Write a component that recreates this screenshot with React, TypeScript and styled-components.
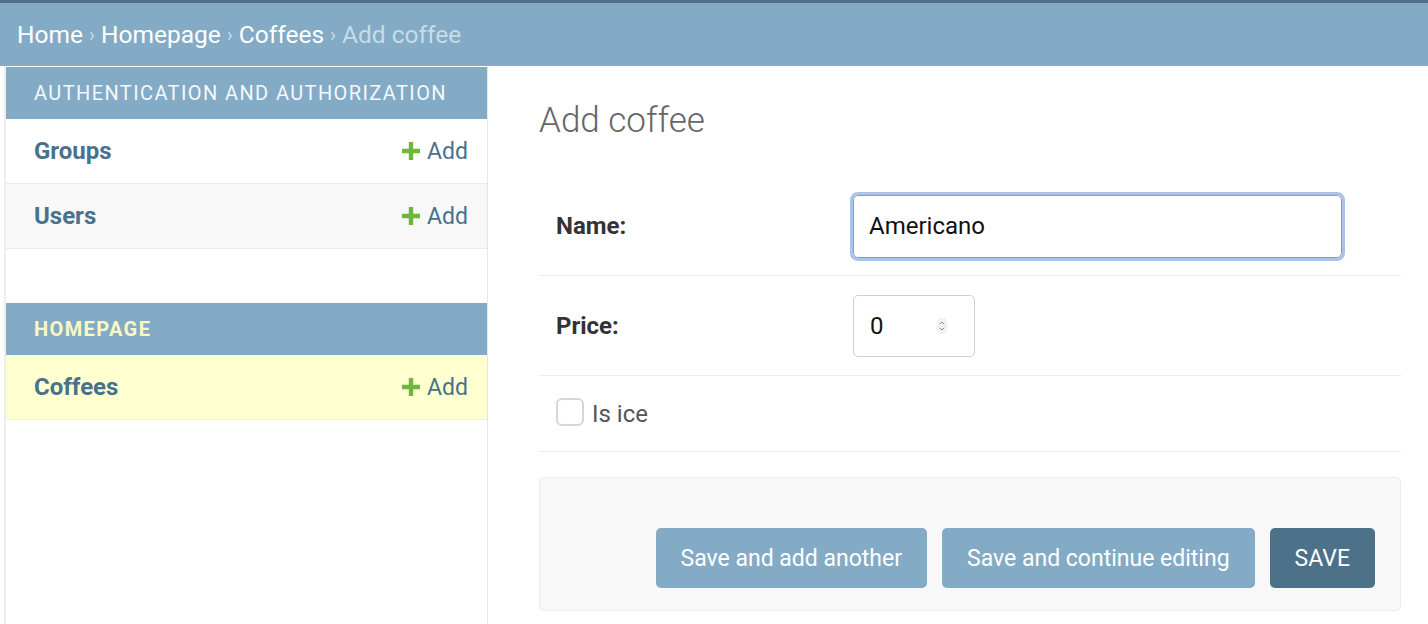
import React from "react";
import styled, { createGlobalStyle } from "styled-components";

const Global = createGlobalStyle`
  html, body { margin: 0; padding: 0; background: #fff; }
  body { font-family: Roboto, "Liberation Sans", Arial, sans-serif; color: #333; }
  * { box-sizing: border-box; }
`;

const Page = styled.div`
  width: 1428px;
  height: 624px;
  overflow: hidden;
  display: flex;
  flex-direction: column;
`;

const Breadcrumbs = styled.nav`
  height: 66px;
  background: #83abc5;
  border-top: 3px solid #4d6f88;
  padding: 0 0 0 17px;
  display: flex;
  align-items: center;
  font-size: 24.5px;
  color: #eaf2f7;
  white-space: nowrap;
`;

const Crumb = styled.span<{ $current?: boolean }>`
  color: ${(p) => (p.$current ? "#c7dce9" : "#ffffff")};
`;

const Sep = styled.span`
  color: #c7dce9;
  margin: 0 6px;
  font-size: 20px;
`;

const Body = styled.div`
  flex: 1;
  display: flex;
  min-height: 0;
`;

const Sidebar = styled.aside`
  width: 484px;
  margin-left: 4px;
  border-left: 2px solid #eeeeee;
  border-right: 1px solid #e6e6e6;
  padding-top: 1px;
`;

const Module = styled.div`
  margin-bottom: 54px;
`;

const Caption = styled.div<{ $current?: boolean }>`
  height: 52px;
  background: #83abc5;
  display: flex;
  align-items: center;
  padding-left: 28px;
  font-size: 20px;
  letter-spacing: 1.4px;
  font-weight: ${(p) => (p.$current ? 700 : 400)};
  color: ${(p) => (p.$current ? "#fbf8c4" : "#f4f8fb")};
  text-transform: uppercase;
`;

const ModelRow = styled.div<{ $alt?: boolean; $current?: boolean }>`
  height: 65px;
  display: flex;
  align-items: center;
  justify-content: space-between;
  padding: 0 19px 0 28px;
  border-bottom: 1px solid #ececec;
  background: ${(p) => (p.$current ? "#ffffcf" : p.$alt ? "#f8f8f8" : "#ffffff")};
`;

const ModelLink = styled.span`
  font-size: 24px;
  font-weight: 700;
  color: #48718d;
`;

const AddLink = styled.span`
  display: flex;
  align-items: center;
  gap: 7px;
  font-size: 23px;
  color: #48718d;
`;

const Main = styled.main`
  flex: 1;
  padding: 34px 27px 0 51px;
`;

const Title = styled.h1`
  margin: 0 0 35px 0;
  font-size: 35px;
  font-weight: 300;
  color: #666;
  line-height: 42px;
`;

const FormRow = styled.div<{ $h: number }>`
  height: ${(p) => p.$h}px;
  display: flex;
  align-items: center;
  border-bottom: 1px solid #eeeeee;
  padding-left: 17px;
`;

const Label = styled.label`
  width: 297px;
  font-size: 24px;
  font-weight: 700;
  color: #333;
`;

const TextInput = styled.div`
  width: 489px;
  height: 63px;
  border: 1px solid #9a9a9a;
  border-radius: 5px;
  outline: 3px solid #a9c4ea;
  outline-offset: 0px;
  display: flex;
  align-items: center;
  padding-left: 15px;
  font-size: 24px;
  color: #111;
`;

const NumberInput = styled.div`
  width: 122px;
  height: 62px;
  border: 1px solid #d0d0d0;
  border-radius: 5px;
  display: flex;
  align-items: center;
  justify-content: space-between;
  padding: 0 26px 0 16px;
  font-size: 24px;
  color: #111;
`;

const CheckBox = styled.span`
  width: 28px;
  height: 28px;
  border: 2px solid #d6d6d6;
  border-radius: 6px;
  margin: 0 8px 4px 0;
  background: #fff;
`;

const CheckLabel = styled.span`
  font-size: 24px;
  color: #555;
`;

const SubmitRow = styled.div`
  margin-top: 25px;
  height: 134px;
  background: #f8f8f8;
  border: 1px solid #ededed;
  border-radius: 5px;
  display: flex;
  justify-content: flex-end;
  align-items: flex-start;
  gap: 15px;
  padding: 50px 25px 0 0;
`;

const Button = styled.button<{ $primary?: boolean }>`
  height: 60px;
  border: none;
  border-radius: 5px;
  padding: 0 25px;
  font-family: Roboto, "Liberation Sans", Arial, sans-serif;
  font-size: 23px;
  color: #fff;
  background: ${(p) => (p.$primary ? "#4d7189" : "#84abc5")};
  cursor: pointer;
`;

const Plus = () => (
  <svg width="18" height="18" viewBox="0 0 18 18">
    <path d="M6.8 0h4.4v6.8H18v4.4h-6.8V18H6.8v-6.8H0V6.8h6.8z" fill="#6cb83d" />
  </svg>
);

const Spinner = () => (
  <svg width="12" height="18" viewBox="0 0 12 18">
    <rect x="0.5" y="0.5" width="11" height="17" rx="5.5" fill="#f2f2f2" />
    <path d="M3.8 7.2L6 5l2.2 2.2M3.8 10.8L6 13l2.2-2.2" fill="none" stroke="#888" strokeWidth="1" />
  </svg>
);

const models = [
  { name: "Groups", alt: false },
  { name: "Users", alt: true },
];

export default function App() {
  return (
    <Page>
      <Global />
      <Breadcrumbs>
        <Crumb>Home</Crumb>
        <Sep>›</Sep>
        <Crumb>Homepage</Crumb>
        <Sep>›</Sep>
        <Crumb>Coffees</Crumb>
        <Sep>›</Sep>
        <Crumb $current>Add coffee</Crumb>
      </Breadcrumbs>
      <Body>
        <Sidebar>
          <Module>
            <Caption>Authentication and Authorization</Caption>
            {models.map((m) => (
              <ModelRow key={m.name} $alt={m.alt}>
                <ModelLink>{m.name}</ModelLink>
                <AddLink>
                  <Plus />
                  Add
                </AddLink>
              </ModelRow>
            ))}
          </Module>
          <Module>
            <Caption $current>Homepage</Caption>
            <ModelRow $current>
              <ModelLink>Coffees</ModelLink>
              <AddLink>
                <Plus />
                Add
              </AddLink>
            </ModelRow>
          </Module>
        </Sidebar>
        <Main>
          <Title>Add coffee</Title>
          <FormRow $h={99}>
            <Label>Name:</Label>
            <TextInput>Americano</TextInput>
          </FormRow>
          <FormRow $h={100}>
            <Label>Price:</Label>
            <NumberInput>
              0
              <Spinner />
            </NumberInput>
          </FormRow>
          <FormRow $h={76}>
            <CheckBox />
            <CheckLabel>Is ice</CheckLabel>
          </FormRow>
          <SubmitRow>
            <Button>Save and add another</Button>
            <Button>Save and continue editing</Button>
            <Button $primary>SAVE</Button>
          </SubmitRow>
        </Main>
      </Body>
    </Page>
  );
}
